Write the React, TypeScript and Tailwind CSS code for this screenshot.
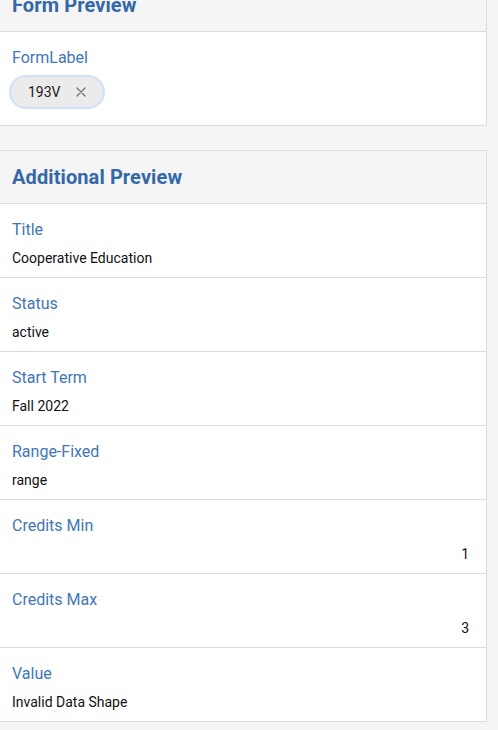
const rows = [
  { label: 'Title', value: 'Cooperative Education' },
  { label: 'Status', value: 'active' },
  { label: 'Start Term', value: 'Fall 2022' },
  { label: 'Range-Fixed', value: 'range' },
  { label: 'Credits Min', value: '1', numeric: true },
  { label: 'Credits Max', value: '3', numeric: true },
  { label: 'Value', value: 'Invalid Data Shape' },
];

const CloseIcon = () => (
  <svg width="10" height="10" viewBox="0 0 10 10" className="text-[#707070]">
    <path d="M1 1 L9 9 M9 1 L1 9" stroke="currentColor" strokeWidth="1.2" strokeLinecap="round" />
  </svg>
);

const CardHeader = ({ title }: { title: string }) => (
  <div className="h-[53px] flex items-center px-3 bg-[#f5f5f5] border-b border-[#dcdcdc]">
    <h2 className="text-[20px] font-bold text-[#3468a8] tracking-[0.1px]">{title}</h2>
  </div>
);

export default function App() {
  return (
    <div
      className="min-h-screen bg-[#f5f5f5] pr-[11px]"
      style={{ fontFamily: 'Roboto, "Noto Sans", sans-serif' }}
    >
      <div className="-mt-[22px] -ml-px flex flex-col gap-6 pb-2">
        <section className="bg-white border border-[#dcdcdc]">
          <CardHeader title="Form Preview" />
          <div className="pt-[14px] px-3 h-[93px]">
            <div className="text-[16px] leading-6 text-[#4276b4]">FormLabel</div>
            <div className="mt-[5px] inline-flex items-center h-[34px] -ml-[3px] pl-[17px] pr-[17px] gap-[15px] rounded-full bg-[#ebebeb] border-2 border-[#cfe2fa]">
              <span className="text-[14px] text-[#1a1a1a]">193V</span>
              <CloseIcon />
            </div>
          </div>
        </section>

        <section className="bg-white border border-[#dcdcdc]">
          <CardHeader title="Additional Preview" />
          {rows.map((row, i) => (
            <div
              key={i}
              className="h-[74px] pt-[14px] px-3 border-b border-[#dcdcdc] last:border-b-0 last:h-[73px]"
            >
              <div className="text-[16px] leading-6 text-[#4276b4]">{row.label}</div>
              <div
                className={`mt-[6px] text-[14px] leading-5 text-[#111] ${row.numeric ? 'text-right pr-[5px]' : ''}`}
              >
                {row.value}
              </div>
            </div>
          ))}
        </section>
      </div>
    </div>
  );
}
